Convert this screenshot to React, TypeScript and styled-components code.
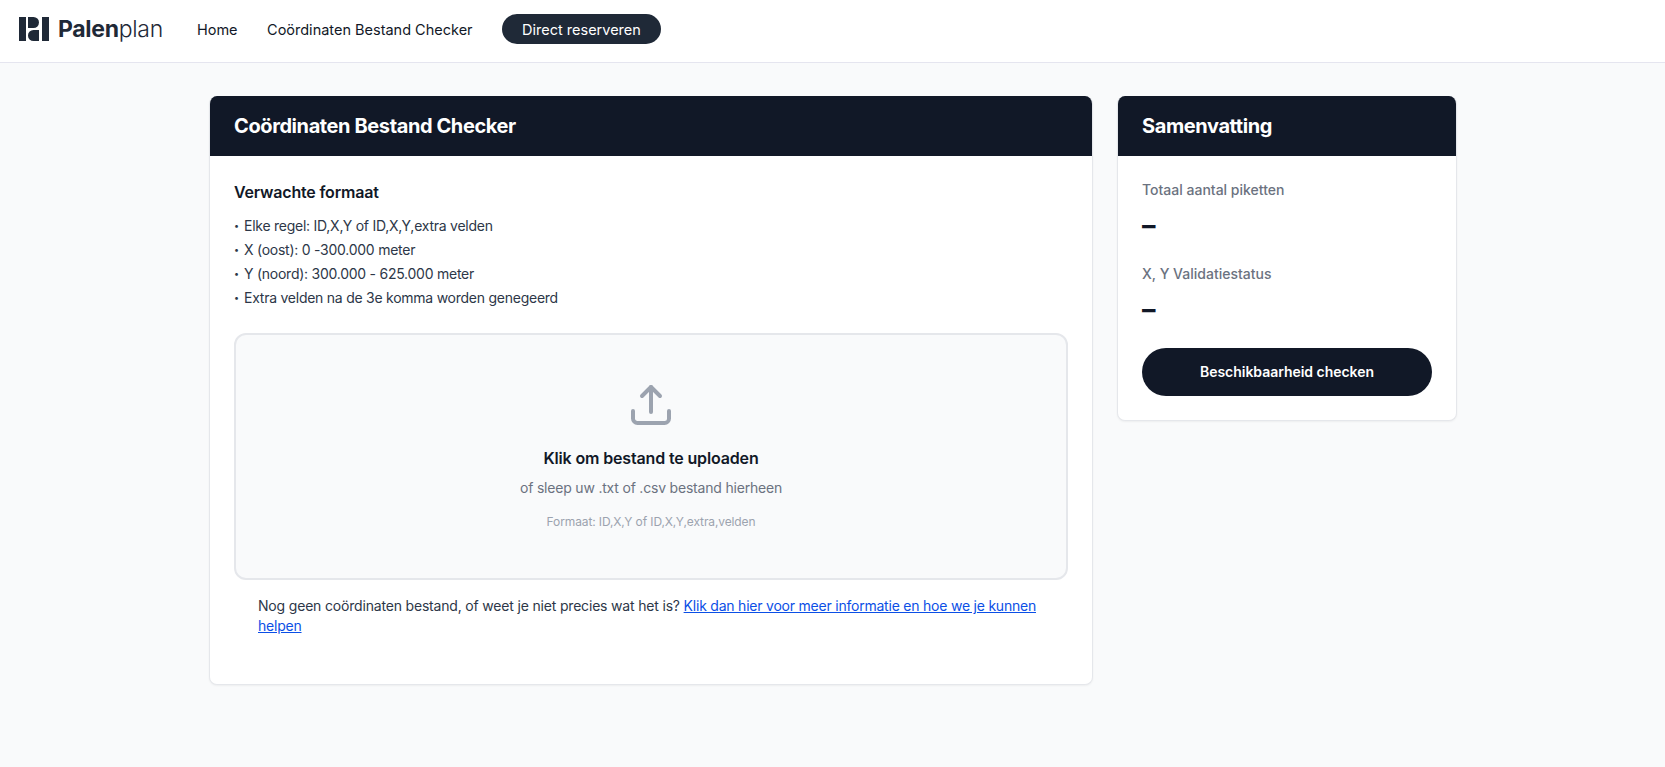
import * as React from 'react'
import styled, { createGlobalStyle } from 'styled-components'

const GlobalStyle = createGlobalStyle`
  html, body {
    margin: 0;
    padding: 0;
    background: #f9fafb;
    font-family: Inter, "Noto Sans", sans-serif;
    color: #111827;
  }
  * { box-sizing: border-box; }
`

const Page = styled.div`
  min-height: 767px;
  background: #f9fafb;
`

const Navbar = styled.header`
  height: 63px;
  background: white;
  border-bottom: 1px solid #e5e5ef;
  display: flex;
  align-items: center;
  padding: 0 19px 4px;
`

const Brand = styled.a`
  display: flex;
  align-items: center;
  gap: 9px;
  margin-right: 34px;
  color: #1f2937;
  font-size: 23px;
  letter-spacing: -0.3px;
`

const BrandBold = styled.span`
  font-weight: 700;
`

const BrandLight = styled.span`
  font-weight: 300;
`

const NavLink = styled.a`
  font-size: 14.5px;
  color: #111827;
  margin-right: 29.5px;
`

const NavButton = styled.a`
  height: 30px;
  padding: 0 20px;
  border-radius: 15px;
  background: #1f2937;
  color: white;
  font-size: 14.5px;
  display: flex;
  align-items: center;
`

const Main = styled.main`
  width: 1248px;
  margin: 33px 0 0 209px;
  display: grid;
  grid-template-columns: 884px 340px;
  gap: 24px;
  align-items: start;
`

const Card = styled.section`
  background: white;
  border: 1px solid #e5e7eb;
  border-top: 0;
  border-radius: 8px;
  box-shadow: 0 1px 2px rgba(0, 0, 0, 0.05);
  overflow: hidden;
`

const CardHeader = styled.h2`
  margin: 0 -1px;
  height: 60px;
  padding: 0 25px;
  background: #111827;
  color: white;
  font-size: 20px;
  font-weight: 700;
  letter-spacing: -0.4px;
  display: flex;
  align-items: center;
`

const CardBody = styled.div`
  padding: 24px;
`

const SectionTitle = styled.h3`
  margin: 0 0 10px;
  font-size: 16px;
  line-height: 24px;
  font-weight: 600;
  letter-spacing: -0.19px;
  color: #111827;
`

const FormatList = styled.ul`
  list-style: none;
  padding: 0;
  margin: 0 0 23px;
  font-size: 14px;
  line-height: 24px;
  letter-spacing: -0.25px;
  color: #2d3748;
`

const FormatItem = styled.li`
  display: flex;
`

const Bullet = styled.span`
  width: 10px;
  font-size: 9px;
`

const UploadBox = styled.div`
  height: 247px;
  border: 2px solid #e5e7eb;
  border-radius: 12px;
  background: #f9fafb;
  display: flex;
  flex-direction: column;
  align-items: center;
  padding-top: 46px;
`

const UploadTitle = styled.div`
  margin-top: 17px;
  font-size: 16px;
  line-height: 24px;
  font-weight: 600;
  letter-spacing: -0.15px;
  color: #111827;
`

const UploadHint = styled.div`
  margin-top: 8px;
  font-size: 14px;
  line-height: 20px;
  letter-spacing: -0.2px;
  color: #6b7280;
`

const UploadFormat = styled.div`
  margin-top: 16px;
  font-size: 12px;
  line-height: 16px;
  letter-spacing: -0.11px;
  color: #9ca3af;
`

const Note = styled.p`
  margin: 16px 0 24px;
  padding: 0 24px;
  font-size: 14px;
  line-height: 20px;
  letter-spacing: -0.18px;
  color: #2d3748;
`

const NoteLink = styled.a`
  color: #0b4fe6;
  letter-spacing: -0.22px;
  text-decoration: underline;
`

const StatLabel = styled.div`
  font-size: 14px;
  line-height: 20px;
  font-weight: 500;
  color: #6b7280;
  margin-bottom: 10px;
`

const StatValue = styled.div`
  font-size: 27px;
  line-height: 32px;
  font-weight: 700;
  color: #111827;
  margin-bottom: 22px;
`

const CheckButton = styled.button`
  display: block;
  width: 100%;
  height: 48px;
  border: 0;
  border-radius: 24px;
  background: #111827;
  color: white;
  font-family: inherit;
  font-size: 14px;
  font-weight: 600;
  letter-spacing: -0.03px;
  padding-bottom: 2px;
`

const Logo = () => (
  <svg width="30" height="24" viewBox="0 0 30 24" fill="#1f2937">
    <rect x="0" y="0" width="7" height="24" />
    <path d="M9 0h5.5a5.5 5.5 0 0 1 0 11H9z" />
    <path d="M20 13h-5.5a5.5 5.5 0 0 0 0 11H20z" />
    <rect x="23" y="0" width="7" height="24" />
  </svg>
)

const UploadIcon = () => (
  <svg width="48" height="48" viewBox="0 0 24 24" fill="none" stroke="#9ca3af" strokeWidth="2" strokeLinecap="round" strokeLinejoin="round">
    <path d="M3 15v3.75A2.25 2.25 0 0 0 5.25 21h13.5A2.25 2.25 0 0 0 21 18.75V15" />
    <path d="M7.5 7.5 12 3l4.5 4.5" />
    <path d="M12 3v12.5" />
  </svg>
)

const formatRules = [
  'Elke regel: ID,X,Y of ID,X,Y,extra velden',
  'X (oost): 0 -300.000 meter',
  'Y (noord): 300.000 - 625.000 meter',
  'Extra velden na de 3e komma worden genegeerd',
]

export default function App() {
  return (
    <Page>
      <GlobalStyle />
      <Navbar>
        <Brand>
          <Logo />
          <span><BrandBold>Palen</BrandBold><BrandLight>plan</BrandLight></span>
        </Brand>
        <NavLink>Home</NavLink>
        <NavLink>Coördinaten Bestand Checker</NavLink>
        <NavButton>Direct reserveren</NavButton>
      </Navbar>
      <Main>
        <Card>
          <CardHeader>Coördinaten Bestand Checker</CardHeader>
          <CardBody>
            <SectionTitle>Verwachte formaat</SectionTitle>
            <FormatList>
              {formatRules.map((rule) => (
                <FormatItem key={rule}><Bullet>•</Bullet>{rule}</FormatItem>
              ))}
            </FormatList>
            <UploadBox>
              <UploadIcon />
              <UploadTitle>Klik om bestand te uploaden</UploadTitle>
              <UploadHint>of sleep uw .txt of .csv bestand hierheen</UploadHint>
              <UploadFormat>Formaat: ID,X,Y of ID,X,Y,extra,velden</UploadFormat>
            </UploadBox>
            <Note>
              Nog geen coördinaten bestand, of weet je niet precies wat het is?{' '}
              <NoteLink href="#">Klik dan hier voor meer informatie en hoe we je kunnen helpen</NoteLink>
            </Note>
          </CardBody>
        </Card>
        <Card>
          <CardHeader>Samenvatting</CardHeader>
          <CardBody>
            <StatLabel>Totaal aantal piketten</StatLabel>
            <StatValue>–</StatValue>
            <StatLabel>X, Y Validatiestatus</StatLabel>
            <StatValue>–</StatValue>
            <CheckButton>Beschikbaarheid checken</CheckButton>
          </CardBody>
        </Card>
      </Main>
    </Page>
  )
}
